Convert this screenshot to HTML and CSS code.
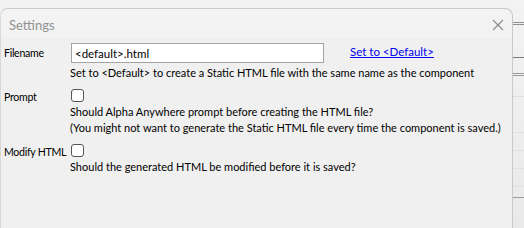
FILE: index.html
```html
<!DOCTYPE html>
<html lang="en">
<head>
    <meta charset="UTF-8">
    <title>Settings</title>
    <link rel="stylesheet" href="styles.css">
</head>
<body>
    <div class="desktop">
        <div class="dialog">
            <div class="titlebar">
                <span class="title">Settings</span>
                <svg class="close" width="12" height="12" viewBox="0 0 12 12">
                    <path d="M1 1 L11 11 M11 1 L1 11" stroke="#8a8a8a" stroke-width="1.1" fill="none"/>
                </svg>
            </div>
            <div class="content">
                <div class="row">
                    <div class="label">Filename</div>
                    <div class="field">
                        <div class="line">
                            <input class="textbox" type="text" value="&lt;default&gt;.html">
                            <a class="link" href="#">Set to &lt;Default&gt;</a>
                        </div>
                        <div class="help">Set to &lt;Default&gt; to create a Static HTML file with the same name as the component</div>
                    </div>
                </div>
                <div class="row row-prompt">
                    <div class="label">Prompt</div>
                    <div class="field">
                        <span class="check"></span>
                        <div class="help">Should Alpha Anywhere prompt before creating the HTML file?</div>
                        <div class="help">(You might not want to generate the Static HTML file every time the component is saved.)</div>
                    </div>
                </div>
                <div class="row row-modify">
                    <div class="label">Modify HTML</div>
                    <div class="field">
                        <span class="check"></span>
                        <div class="help">Should the generated HTML be modified before it is saved?</div>
                    </div>
                </div>
            </div>
        </div>
        <div class="behind">
            <div class="rule r1"></div>
            <div class="rule r2"></div>
            <div class="rule r3"></div>
            <div class="rule r4"></div>
            <div class="rule r5"></div>
            <div class="rule r6"></div>
            <div class="rule r7"></div>
            <div class="rule r8"></div>
            <div class="rule r9"></div>
            <div class="rule r10"></div>
            <div class="rule r11"></div>
        </div>
    </div>
</body>
</html>
```

FILE: styles.css
```css
html, body {
    margin: 0;
    padding: 0;
    background: #f1f1f1;
    overflow: hidden;
}
body {
    font-family: Lato, "Open Sans", sans-serif;
    font-size: 11px;
    color: #000;
}
.desktop {
    display: flex;
    height: 228px;
}
.dialog {
    width: 511px;
    margin-top: 8px;
    background: #f0f0f0;
    border: 1px solid #c9c9c9;
    border-bottom: none;
    border-left-color: #d8d8d8;
    border-radius: 8px 8px 0 0;
    flex-shrink: 0;
}
.titlebar {
    height: 29px;
    background: #f3f3f3;
    border-radius: 8px 8px 0 0;
    display: flex;
    align-items: center;
    justify-content: space-between;
    padding: 0 8px 0 8px;
}
.title {
    color: #929292;
    font-size: 13px;
    margin-top: 2px;
}
.close {
    margin-top: 2px;
}
.content {
    padding: 5px 0 0 3px;
}
.row {
    display: flex;
}
.label {
    width: 66px;
    flex-shrink: 0;
    line-height: 16px;
    padding-top: 2px;
    white-space: nowrap;
    font-size: 10.6px;
    letter-spacing: -0.3px;
}
.field {
    flex: 1;
    min-width: 0;
}
.line {
    display: flex;
    align-items: center;
}
.textbox {
    width: 253px;
    height: 20px;
    box-sizing: border-box;
    border: 1px solid #a3a3a3;
    background: #fff;
    font: inherit;
    font-size: 11.5px;
    padding: 0 3px;
    margin: 0 0 0 1px;
    outline: none;
}
.link {
    margin-left: 26px;
    color: #0000ee;
    margin-top: -4px;
    font-size: 11.5px;
}
.help {
    line-height: 16px;
    white-space: nowrap;
}
.row .line + .help {
    margin-top: 2px;
}
.row-prompt {
    margin-top: 6px;
}
.row-modify {
    margin-top: 6px;
}
.check {
    display: block;
    width: 11px;
    height: 11px;
    border: 1px solid #555;
    border-radius: 3px;
    background: #fff;
    margin: 2px 0 2px 1px;
}
.behind {
    flex: 1;
    background: linear-gradient(#f3f3f3, #e9e9e9);
    position: relative;
}
.rule {
    position: absolute;
    left: 0;
    right: 0;
    height: 1px;
    background: #e0e0e0;
}
.r1 { top: 22px; background: #8f8f8f; }
.r2 { top: 24px; background: #8f8f8f; }
.r3 { top: 57px; background: #7a7a7a; }
.r4 { top: 73px; background: #9a9a9a; }
.r5 { top: 75px; background: #9a9a9a; }
.r6 { top: 96px; }
.r7 { top: 132px; }
.r8 { top: 150px; }
.r9 { top: 168px; }
.r10 { top: 186px; }
.r11 { top: 197px; background: #9a9a9a; }
```
